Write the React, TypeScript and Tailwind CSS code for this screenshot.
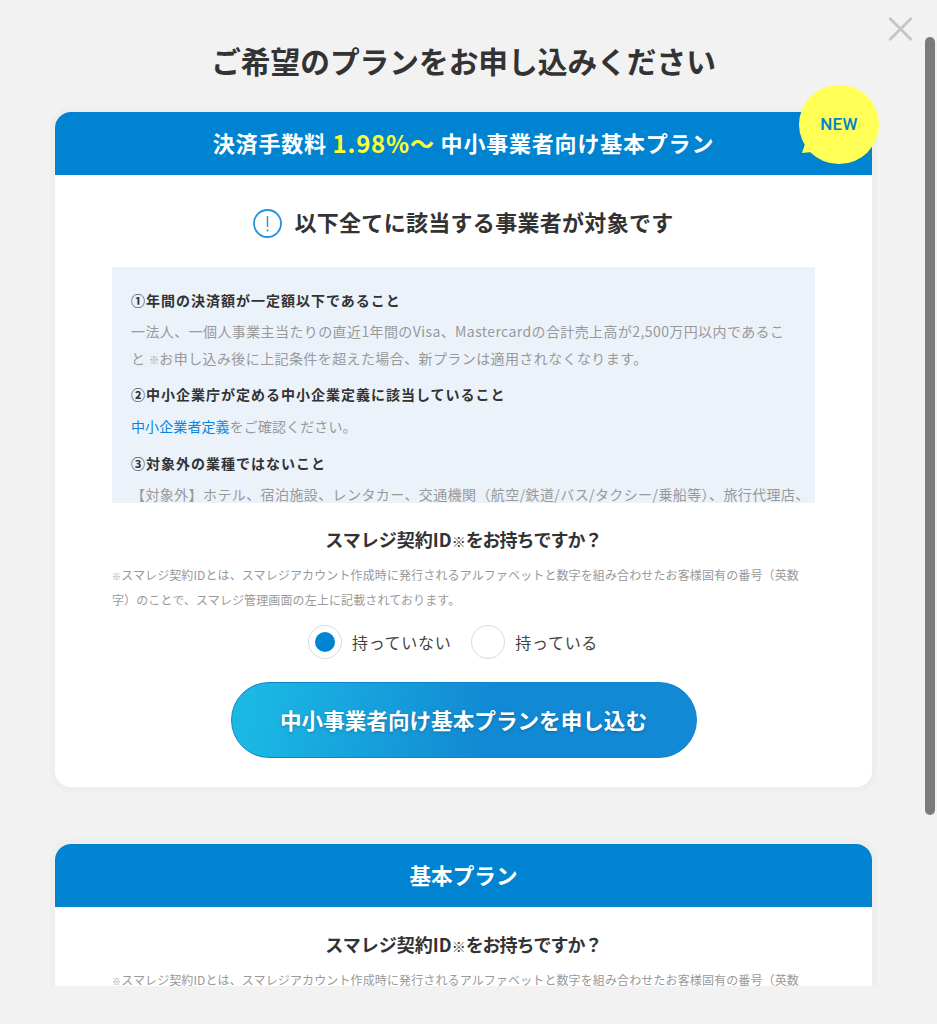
import React from "react";

const FONT = "font-['Noto_Sans_CJK_JP','Noto_Sans',sans-serif]";

function ContractQuestion() {
  return (
    <>
      <h3 className="text-center text-[18px] leading-[27px] font-bold text-[#333]">
        スマレジ契約ID<span className="text-[14px] leading-[0]">※</span><span className="tracking-[-1px]">をお持ちですか？</span>
      </h3>
      <p className="mt-[9px] text-[12px] leading-[25px] tracking-[0.12px] text-[#999]">
        <span className="text-[9px] leading-[0]">※</span>スマレジ契約IDとは、スマレジアカウント作成時に発行されるアルファベットと数字を組み合わせたお客様固有の番号（英数字）のことで、スマレジ管理画面の左上に記載されております。
      </p>
    </>
  );
}

function Radio({ checked, label }: { checked?: boolean; label: string }) {
  return (
    <label className="flex items-center gap-[10px]">
      <span className="flex h-[34px] w-[34px] items-center justify-center rounded-full border border-[#d5dde6] bg-white">
        {checked && <span className="h-[20px] w-[20px] rounded-full bg-[#0083d0]" />}
      </span>
      <span className="text-[16px] leading-[24px] tracking-[0.7px] text-[#444]">{label}</span>
    </label>
  );
}

export default function App() {
  return (
    <div className={`relative h-[1024px] w-[937px] overflow-hidden bg-[#f2f2f2] ${FONT}`}>
      <div className="h-[986px] overflow-hidden pr-[65px] pl-[55px] pt-[40px]">
        <h1 className="text-center text-[29.7px] leading-[42px] font-bold text-[#333]">
          ご希望のプランをお申し込みください
        </h1>

        <section className="relative mt-[30px] rounded-[16px] bg-white shadow-[0_0_0_5px_#eeeeee]">
          <header className="flex h-[63px] items-center justify-center rounded-t-[16px] bg-[#0083d0] pb-[2px] text-[22px] font-bold tracking-[0.8px] text-white">
            決済手数料&nbsp;<span className="text-[24px] text-[#ffff33]">1.98%〜</span>&nbsp;中小事業者向け基本プラン
          </header>

          <div className="absolute right-[-7px] top-[-27px]">
            <div className="relative flex h-[79px] w-[80px] items-center justify-center rounded-full bg-[#ffff55]">
              <span className="text-[17px] font-medium tracking-[0.3px] text-[#0083d0] font-['Roboto',sans-serif]">NEW</span>
              <svg className="absolute bottom-[10px] left-[3px]" width="10" height="10" viewBox="0 0 10 10">
                <path d="M3 0 L0 9 L10 8 Z" fill="#ffff55" />
              </svg>
            </div>
          </div>

          <div className="px-[57px] pb-[29px]">
            <div className="flex h-[92px] items-center justify-center gap-[12px]">
              <svg className="mt-[4px]" width="29" height="29" viewBox="0 0 29 29" fill="none">
                <circle cx="14.5" cy="14.5" r="13.5" stroke="#2492d8" strokeWidth="1.8" />
                <path d="M14.5 7 V18" stroke="#2492d8" strokeWidth="1.4" />
                <circle cx="14.5" cy="21.5" r="1" fill="#2492d8" />
              </svg>
              <h2 className="text-[22px] leading-[32px] font-bold tracking-[0.3px] text-[#333]">以下全てに該当する事業者が対象です</h2>
            </div>

            <div className="h-[236px] overflow-hidden bg-[#ebf2f9] px-[19px] pt-[20px] text-[14px]">
              <h4 className="leading-[27px] font-bold tracking-[1px] text-[#333]">①年間の決済額が一定額以下であること</h4>
              <p className="mt-[4px] leading-[27px] tracking-[0.4px] text-[#999]">
                一法人、一個人事業主当たりの直近1年間のVisa、Mastercardの合計売上高が2,500万円以内であること <span className="text-[10px] leading-[0]">※</span>お申し込み後に上記条件を超えた場合、新プランは適用されなくなります。
              </p>
              <h4 className="mt-[9px] leading-[27px] font-bold tracking-[1px] text-[#333]">②中小企業庁が定める中小企業定義に該当していること</h4>
              <p className="mt-[5px] leading-[27px] tracking-[0.1px] text-[#999]">
                <a className="text-[#0a84e0]">中小企業者定義</a>をご確認ください。
              </p>
              <h4 className="mt-[10px] leading-[27px] font-bold tracking-[1px] text-[#333]">③対象外の業種ではないこと</h4>
              <p className="mt-[4px] leading-[27px] tracking-[0.4px] whitespace-nowrap text-[#999]">
                【対象外】ホテル、宿泊施設、レンタカー、交通機関（航空/鉄道/バス/タクシー/乗船等）、旅行代理店、
              </p>
            </div>

            <div className="mt-[23px]">
              <ContractQuestion />
            </div>

            <div className="mt-[13px] flex justify-center gap-[20px] pr-[21px]">
              <Radio checked label="持っていない" />
              <Radio label="持っている" />
            </div>

            <button className="mx-auto mt-[23px] flex h-[76px] w-[466px] items-center justify-center rounded-full border border-[#0f83cc] bg-[linear-gradient(100deg,#1bb8e4_5%,#1289d4_55%)] text-[21.6px] font-bold text-white [text-shadow:0_1px_3px_rgba(0,0,0,0.25)]">
              中小事業者向け基本プランを申し込む
            </button>
          </div>
        </section>

        <section className="mt-[57px] rounded-[16px] bg-white shadow-[0_0_0_5px_#eeeeee]">
          <header className="flex h-[63px] items-center justify-center rounded-t-[16px] bg-[#0083d0] text-[21.6px] font-bold text-white">
            基本プラン
          </header>
          <div className="px-[57px] pt-[24px]">
            <ContractQuestion />
          </div>
        </section>
      </div>

      {/* close button, floats over the modal */}
      <svg className="absolute left-[888px] top-[17px]" width="25" height="24" viewBox="0 0 25 24" fill="none">
        <path d="M1.5 1 L23.5 23 M23.5 1 L1.5 23" stroke="#c4c4c4" strokeWidth="2.6" />
      </svg>
      {/* overlay scrollbar */}
      <div className="absolute left-[925px] top-[37px] h-[778px] w-[10px] rounded-full bg-[#7b7b7b]" />
    </div>
  );
}
